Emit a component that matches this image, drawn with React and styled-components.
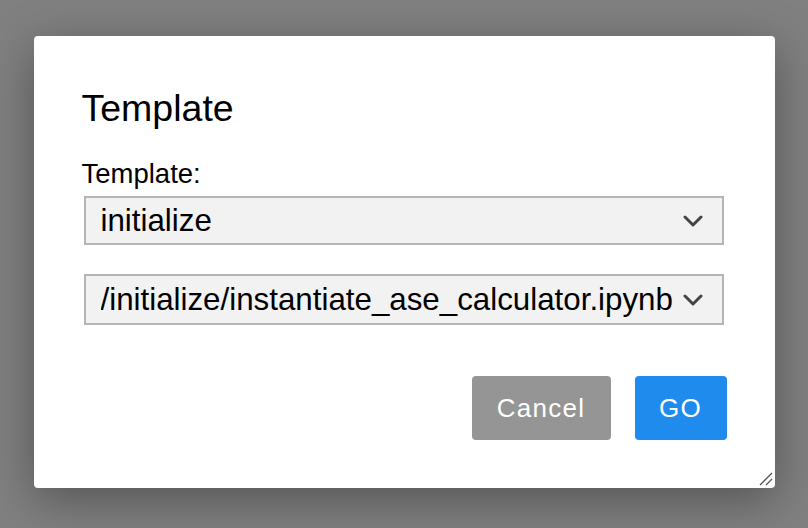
import React from "react";
import styled, { createGlobalStyle } from "styled-components";

const Global = createGlobalStyle`
  html, body { margin: 0; padding: 0; }
  body { background: #808080; font-family: "Liberation Sans", Arial, sans-serif; }
`;

const Overlay = styled.div`
  min-height: 100vh;
  box-sizing: border-box;
  background: #808080;
  display: flex;
  justify-content: center;
  align-items: flex-start;
  padding-top: 36px;
`;

const Dialog = styled.div`
  position: relative;
  width: 741px;
  height: 452px;
  box-sizing: border-box;
  background: #fff;
  border-radius: 4px;
  box-shadow: 0 12px 48px rgba(0, 0, 0, 0.35);
  padding: 51px 48px 48px 48px;
  display: flex;
  flex-direction: column;
`;

const Title = styled.h2`
  margin: 0;
  font-size: 37.5px;
  line-height: 42px;
  font-weight: 400;
  color: #000;
`;

const Label = styled.label`
  margin-top: 30px;
  font-size: 27.5px;
  line-height: 30px;
  color: #000;
`;

const SelectWrap = styled.div`
  position: relative;
  margin-top: ${(p) => p.$gap}px;
  margin-left: 2px;
  width: 640px;
`;

const Select = styled.select`
  appearance: none;
  -webkit-appearance: none;
  width: 100%;
  height: ${(p) => p.$h}px;
  box-sizing: border-box;
  border: 2px solid #b5b5b5;
  border-radius: 0;
  background: #f2f2f2;
  padding: 0 48px 0 15px;
  font-family: "Liberation Sans", Arial, sans-serif;
  font-size: 31.3px;
  color: #000;
  outline: none;
`;

const Chevron = styled.svg`
  position: absolute;
  right: 21px;
  top: 50%;
  transform: translateY(-50%);
  width: 20px;
  height: 12px;
  pointer-events: none;
`;

const Actions = styled.div`
  margin-top: auto;
  display: flex;
  justify-content: flex-end;
  gap: 24px;
`;

const Button = styled.button`
  height: 64px;
  width: ${(p) => p.$w}px;
  border: none;
  border-radius: 4px;
  background: ${(p) => p.$bg};
  color: #fff;
  font-family: "Liberation Sans", Arial, sans-serif;
  font-size: 26px;
  letter-spacing: 1.3px;
  cursor: pointer;
`;

const Grip = styled.svg`
  position: absolute;
  right: 2px;
  bottom: 2px;
  width: 14px;
  height: 14px;
`;

const Arrow = () => (
  <Chevron viewBox="0 0 20 12">
    <path d="M2 2 L10 10 L18 2" fill="none" stroke="#444" strokeWidth="3" strokeLinecap="round" strokeLinejoin="round" />
  </Chevron>
);

export default function App() {
  return (
    <>
      <Global />
      <Overlay>
        <Dialog>
          <Title>Template</Title>
          <Label>Template:</Label>
          <SelectWrap $gap={7}>
            <Select $h={49} defaultValue="initialize">
              <option value="initialize">initialize</option>
            </Select>
            <Arrow />
          </SelectWrap>
          <SelectWrap $gap={29}>
            <Select $h={51} defaultValue="a">
              <option value="a">/initialize/instantiate_ase_calculator.ipynb</option>
            </Select>
            <Arrow />
          </SelectWrap>
          <Actions>
            <Button $w={139} $bg="#959595">Cancel</Button>
            <Button $w={92} $bg="#1f8ced">GO</Button>
          </Actions>
          <Grip viewBox="0 0 14 14">
            <path d="M1 13 L13 1 M7 13 L13 7" stroke="#555" strokeWidth="1.3" />
          </Grip>
        </Dialog>
      </Overlay>
    </>
  );
}
